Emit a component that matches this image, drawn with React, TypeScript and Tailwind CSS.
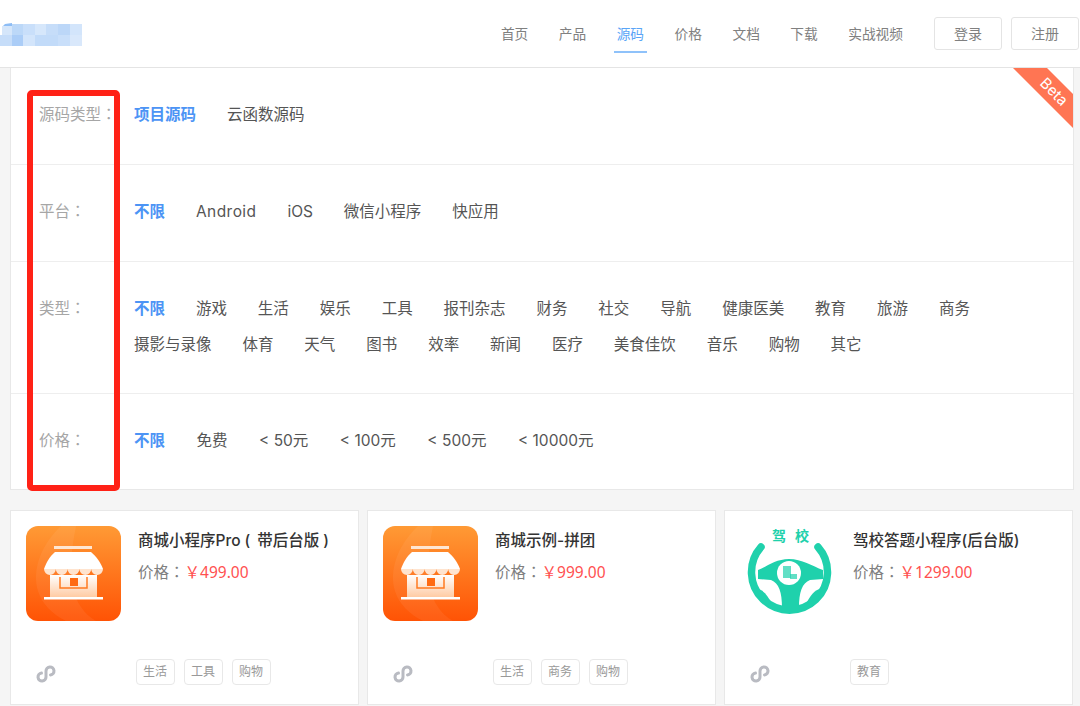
const font = "font-['Inter','Noto_Sans_CJK_SC',sans-serif]";

function Logo() {
  const cells = [
    [2, 26, '#d5e6fa'], [12, 24, '#bcd8f8'], [23, 24, '#c9dffa'], [35, 24, '#d6e7fb'], [46, 24, '#c6ddf9'], [58, 24, '#bcd7f8'], [70, 24, '#d3e5fb'],
    [0, 35, '#c6ddf9'], [12, 35, '#abcdf7'], [23, 35, '#d3e5fb'], [35, 35, '#c2dbf9'], [46, 35, '#c2dbf9'], [58, 35, '#c9dffa'], [70, 35, '#d9e8fb'],
  ] as const;
  return (
    <svg width="82" height="24" viewBox="0 22 82 24" className="shrink-0">
      {cells.map(([x, y, c], i) => (
        <rect key={i} x={x} y={y} width="12" height="11" fill={c as string} />
      ))}
      <path d="M5 24L12 23V26H3Z" fill="#8dbdf5" />
    </svg>
  );
}

function MiniIcon() {
  return (
    <svg width="20" height="20" viewBox="0 0 20 20" fill="none" stroke="#b9bbc2" strokeWidth="3" strokeLinecap="round">
      <path d="M5.500 9.100A4 4 0 1 0 10 13V7A4 4 0 1 1 14.500 10.900" />
    </svg>
  );
}

function Store({ id }: { id: string }) {
  return (
    <svg width="95" height="95" viewBox="0 0 95 95" className="shrink-0 rounded-[12px]">
      <defs>
        <linearGradient id={`bg${id}`} x1="0" y1="0" x2="0" y2="1">
          <stop offset="0" stopColor="#ff9a35" />
          <stop offset="1" stopColor="#ff5305" />
        </linearGradient>
        <linearGradient id={`w${id}`} x1="0" y1="0" x2="0" y2="1">
          <stop offset="0" stopColor="#ffffff" />
          <stop offset="1" stopColor="#ffc9a0" />
        </linearGradient>
      </defs>
      <rect width="95" height="95" fill={`url(#bg${id})`} />
      <path d="M35 0C14 20 6 45 12 65C16 78 26 88 40 95H70C45 80 40 50 50 0Z" fill="#ffffff" opacity="0.06" />
      <rect x="28" y="20" width="38" height="3" fill="#ffe6d2" />
      <path d="M29 26H65C70 30 75 37 77 43H18C20 37 24 30 29 26Z" fill="#ffffff" />
      <path d="M18 43a5 5 0 0 0 11.800 0a5 5 0 0 0 11.800 0a5 5 0 0 0 11.800 0a5 5 0 0 0 11.800 0a5 5 0 0 0 11.800 0Z" fill="#ffe4cf" />
      <path d="M24 49V72H71V49Z" fill={`url(#w${id})`} />
      <path d="M34 51V62H61V51" fill="none" stroke="#ff7a20" strokeWidth="1.500" />
      <rect x="44" y="52" width="8" height="8" fill="#ff6a12" />
      <rect x="18" y="71" width="59" height="2.500" fill="#fff" />
    </svg>
  );
}

function Wheel() {
  return (
    <div className="relative h-[95px] w-[96px] shrink-0">
      <svg width="95" height="95" viewBox="0 0 95 95" className="absolute left-0 top-0">
        <path d="M21 21A38 38 0 1 0 78 21" fill="none" stroke="#1fd1ac" strokeWidth="7.500" strokeLinecap="round" />
        <path d="M18 44C28 40 36 33 49 33C62 33 72 40 83 44V53L70 54C62 57 59 66 59 82H42C42 66 39 57 31 54L18 53Z" fill="#1fd1ac" />
        <path d="M16 62C24 64 28 70 32 78L20 72Z" fill="#1fd1ac" />
        <path d="M82 62C74 64 70 70 66 78L78 72Z" fill="#1fd1ac" />
        <circle cx="49" cy="47" r="12" fill="#fff" />
        <rect x="43" y="40" width="8" height="12" fill="#1fd1ac" opacity="0.700" />
        <rect x="50" y="48" width="7" height="5" fill="#1fd1ac" opacity="0.700" />
      </svg>
      <div className="absolute left-[32px] top-[2px] flex gap-[9px] text-[14px] leading-[16px] font-bold text-[#1fd1ac]">
        <span>驾</span>
        <span>校</span>
      </div>
    </div>
  );
}

function Colon() {
  return <span className="font-['Noto_Sans_CJK_TC',sans-serif] leading-[0]">：</span>;
}

function Card({ title, price, tags, icon }: { title: React.ReactNode; price: string; tags: string[]; icon: React.ReactNode }) {
  return (
    <div className="flex h-[195px] w-[349px] flex-col border border-[#e8e8e8] bg-white pl-[15px] pt-[15px]">
      <div className="flex">
        {icon}
        <div className="ml-[17px]">
          <div className="mt-[3px] text-[15.5px] font-medium leading-[24px] text-[#333] whitespace-nowrap">{title}</div>
          <div className="mt-[7px] text-[15.5px] leading-[24px] text-[#808080]">
            价格<Colon />
            <span className="text-[#ff5050]">
              <span className="tracking-[-5px]">￥</span>
              <span className="ml-[5px] font-['Noto_Sans',sans-serif]">{price}</span>
            </span>
          </div>
        </div>
      </div>
      <div className="mt-[38px] flex items-start">
        <div className="ml-[10px] mt-[5px] w-[99.5px]"><MiniIcon /></div>
        <div className="flex gap-[9px]">
          {tags.map((t) => (
            <span key={t} className="flex h-[26px] w-[39px] items-center justify-center rounded-[4px] border border-[#e8e8e8] text-[12px] text-[#999]">
              {t}
            </span>
          ))}
        </div>
      </div>
    </div>
  );
}

function Row({ label, h, children }: { label: string; h: string; children: React.ReactNode }) {
  return (
    <div className={`flex border-b border-[#eeeeee] last:border-b-0 ${h}`}>
      <div className="w-[95px] pl-[28px] pt-[35px] text-[15.5px] leading-[24px] text-[#a6a6a6] whitespace-nowrap box-content">
        {label}<Colon />
      </div>
      <div className="pt-[35px]">{children}</div>
    </div>
  );
}

function Opts({ items, first, gap = 'gap-x-[30.9px]' }: { items: string[]; first?: string; gap?: string }) {
  return (
    <div className={`flex ${gap} text-[15.5px] leading-[24px] text-[#555]`}>
      {first && <span className="font-bold text-[#4c94f5]">{first}</span>}
      {items.map((t) => (
        <span key={t} className={t === 'Android' ? 'whitespace-nowrap tracking-[0.45px]' : 'whitespace-nowrap'}>{t}</span>
      ))}
    </div>
  );
}

export default function App() {
  return (
    <div className={`relative h-[706px] w-[1080px] overflow-hidden bg-[#f5f5f5] ${font}`}>
      <header className="flex h-[68px] items-center justify-between border-b border-[#e4e4e4] bg-white pr-[1px]">
        <Logo />
        <div className="flex items-center">
          <nav className="flex gap-[30.5px] text-[13.7px] text-[#808080]">
            {['首页', '产品'].map((t) => <span key={t} className="leading-[68px]">{t}</span>)}
            <span className="relative leading-[68px] text-[#5aa5f7]">
              源码
              <span className="absolute -left-[3px] -right-[3px] bottom-[15px] h-[2px] bg-[#8fc2fa]" />
            </span>
            {['价格', '文档', '下载', '实战视频'].map((t) => <span key={t} className="leading-[68px]">{t}</span>)}
          </nav>
          <button className="ml-[31px] h-[33px] w-[68px] rounded-[3px] border border-[#e4e4e4] text-[14px] text-[#808080]">登录</button>
          <button className="ml-[9px] h-[33px] w-[68px] rounded-[3px] border border-[#e4e4e4] text-[14px] text-[#808080]">注册</button>
        </div>
      </header>

      <main className="pl-[10px]">
        <section className="relative h-[422px] w-[1064px] overflow-hidden border border-t-0 border-[#e8e8e8] bg-white">
          <Row label="源码类型" h="h-[97px]">
            <Opts first="项目源码" items={['云函数源码']} />
          </Row>
          <Row label="平台" h="h-[97px]">
            <Opts first="不限" items={['Android', 'iOS', '微信小程序', '快应用']} />
          </Row>
          <Row label="类型" h="h-[132px]">
            <Opts first="不限" items={['游戏', '生活', '娱乐', '工具', '报刊杂志', '财务', '社交', '导航', '健康医美', '教育', '旅游', '商务']} />
            <div className="mt-[12px]">
              <Opts items={['摄影与录像', '体育', '天气', '图书', '效率', '新闻', '医疗', '美食佳饮', '音乐', '购物', '其它']} />
            </div>
          </Row>
          <Row label="价格" h="h-[96px]">
            <Opts gap="gap-x-[31.5px]" first="不限" items={['免费', '< 50元', '< 100元', '< 500元', '< 10000元']} />
          </Row>
          <div className="absolute right-[-42px] top-[9px] flex h-[24px] w-[128px] rotate-45 items-center justify-center bg-[#ff7553] pl-[8px] text-[15px] text-white">
            Beta
          </div>
        </section>

        <section className="mt-[20px] flex gap-[8px]">
          <Card
            title={<>商城小程序Pro<span className="ml-[4px] mr-[7px]">(</span>带后台版<span className="ml-[4px]">)</span></>}
            price="499.00"
            tags={['生活', '工具', '购物']}
            icon={<Store id="a" />}
          />
          <Card title="商城示例-拼团" price="999.00" tags={['生活', '商务', '购物']} icon={<Store id="b" />} />
          <Card title="驾校答题小程序(后台版)" price="1299.00" tags={['教育']} icon={<Wheel />} />
        </section>
      </main>

      <div className="absolute left-[27px] top-[90px] h-[401px] w-[93px] rounded-[5px] border-[6px] border-[#ff2116]" />
    </div>
  );
}
